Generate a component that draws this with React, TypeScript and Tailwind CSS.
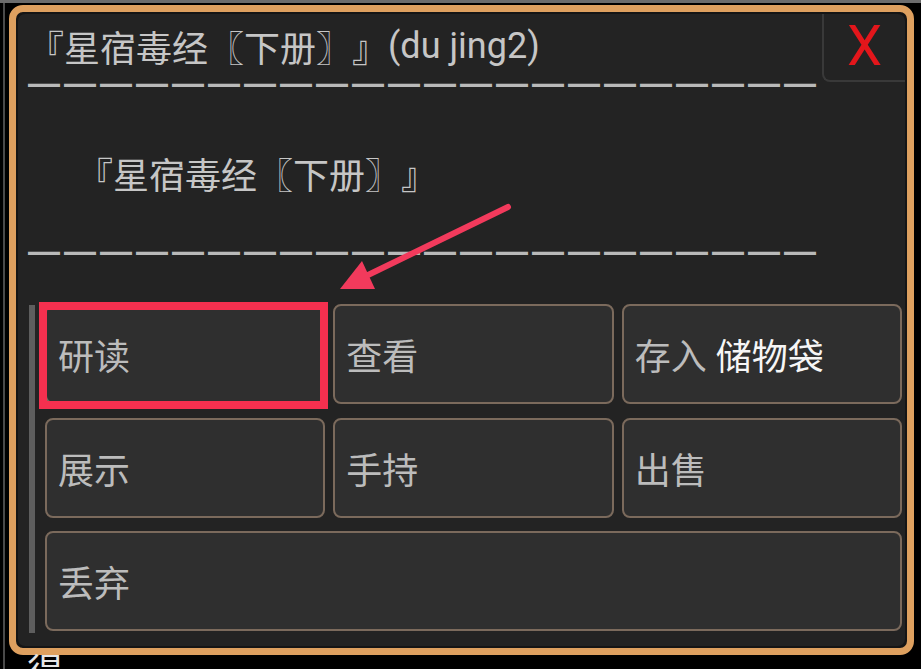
const cjk = "font-['Noto_Sans_CJK_SC',sans-serif]";

function ActionButton({ children, wide }: { children: React.ReactNode; wide?: boolean }) {
  return (
    <div
      className={`flex h-[100px] items-center rounded-[8px] border-2 border-[#7b6a5c] bg-[#2f2f2f] pl-[11px] text-[36px] leading-none text-[#bcbcbc] ${
        wide ? "col-span-3" : ""
      }`}
    >
      {children}
    </div>
  );
}

function Dashes() {
  return (
    <div className="h-[12px] overflow-visible whitespace-nowrap pl-[10px] text-[32px] font-bold leading-[12px] tracking-[4px] text-[#b9b9b9] font-['Liberation_Sans',sans-serif]">
      {"——————————————————————"}
    </div>
  );
}

// full-width box for the lenticular brackets, which otherwise render half width
function BookName() {
  return (
    <>
      『星宿毒经<span className="inline-block w-[36px] text-right">〖</span>下册
      <span className="inline-block w-[36px] text-left">〗</span>』
    </>
  );
}

export default function App() {
  return (
    <div className={`relative flex h-[669px] w-[921px] flex-col overflow-hidden bg-black ${cjk}`}>
      <div className="h-[3px] bg-[#6c6c6c]" />
      <div className="flex min-h-0 flex-1">
        <div className="w-[3px]" />
        <div className="w-[2px] bg-[#4a4a4a]" />
        <div className="flex flex-col pl-[4px] pt-[2px]">
          {/* dialog frame */}
          <div className="h-[650px] w-[905px] shrink-0 rounded-[14px] border-[7px] border-[#dea05f] bg-[#151515] p-[2px]">
            <div className="flex h-full flex-col rounded-[7px] bg-[#232323]">
              <div className="flex h-[63px] items-start">
                <div className="flex h-[63px] flex-1 items-center whitespace-nowrap pl-[10px] text-[36px] leading-none text-[#c6c6c6]">
                  <BookName />
                  <span className="font-['Roboto',sans-serif]">(du jing2)</span>
                </div>
                <div className="flex h-[68px] w-[83px] shrink-0 items-center justify-center rounded-bl-[8px] border-b-2 border-l-2 border-[#393939] pb-[2px] font-['Roboto',sans-serif] text-[56px] leading-none text-[#e3161b]">
                  X
                </div>
              </div>
              <Dashes />
              <div className="mt-[66px] flex whitespace-nowrap pl-[59px] text-[36px] leading-none text-[#c6c6c6]">
                <BookName />
              </div>
              <div className="mt-[54px]">
                <Dashes />
              </div>
              <div className="mt-[47px] flex pl-[11px]">
                <div className="mr-[10px] mt-[1px] h-[328px] w-[6px] bg-[#5e5e5e]" />
                <div className="grid w-[857px] grid-cols-3 gap-x-[8px] gap-y-[12px]">
                  <div className="relative">
                    <ActionButton>研读</ActionButton>
                    <div className="absolute -left-[6px] -top-[2px] h-[107px] w-[289px] border-[8px] border-[#f5304f]" />
                  </div>
                  <ActionButton>查看</ActionButton>
                  <ActionButton>
                    存入<span className="ml-[9px] text-[#f6f6f6]">储物袋</span>
                  </ActionButton>
                  <ActionButton>展示</ActionButton>
                  <ActionButton>手持</ActionButton>
                  <ActionButton>出售</ActionButton>
                  <ActionButton wide>丢弃</ActionButton>
                </div>
              </div>
            </div>
          </div>
          <div className="-mt-[4px] pl-[18px] text-[36px] leading-[36px] text-[#e6e6e6]">得</div>
        </div>
      </div>

      {/* annotation arrow */}
      <svg className="pointer-events-none absolute left-0 top-0" width="921" height="669">
        <line x1="508" y1="207" x2="368" y2="275" stroke="#f23a5c" strokeWidth="6" strokeLinecap="round" />
        <polygon points="340,289 362,261 375,289" fill="#f23a5c" />
      </svg>
    </div>
  );
}
